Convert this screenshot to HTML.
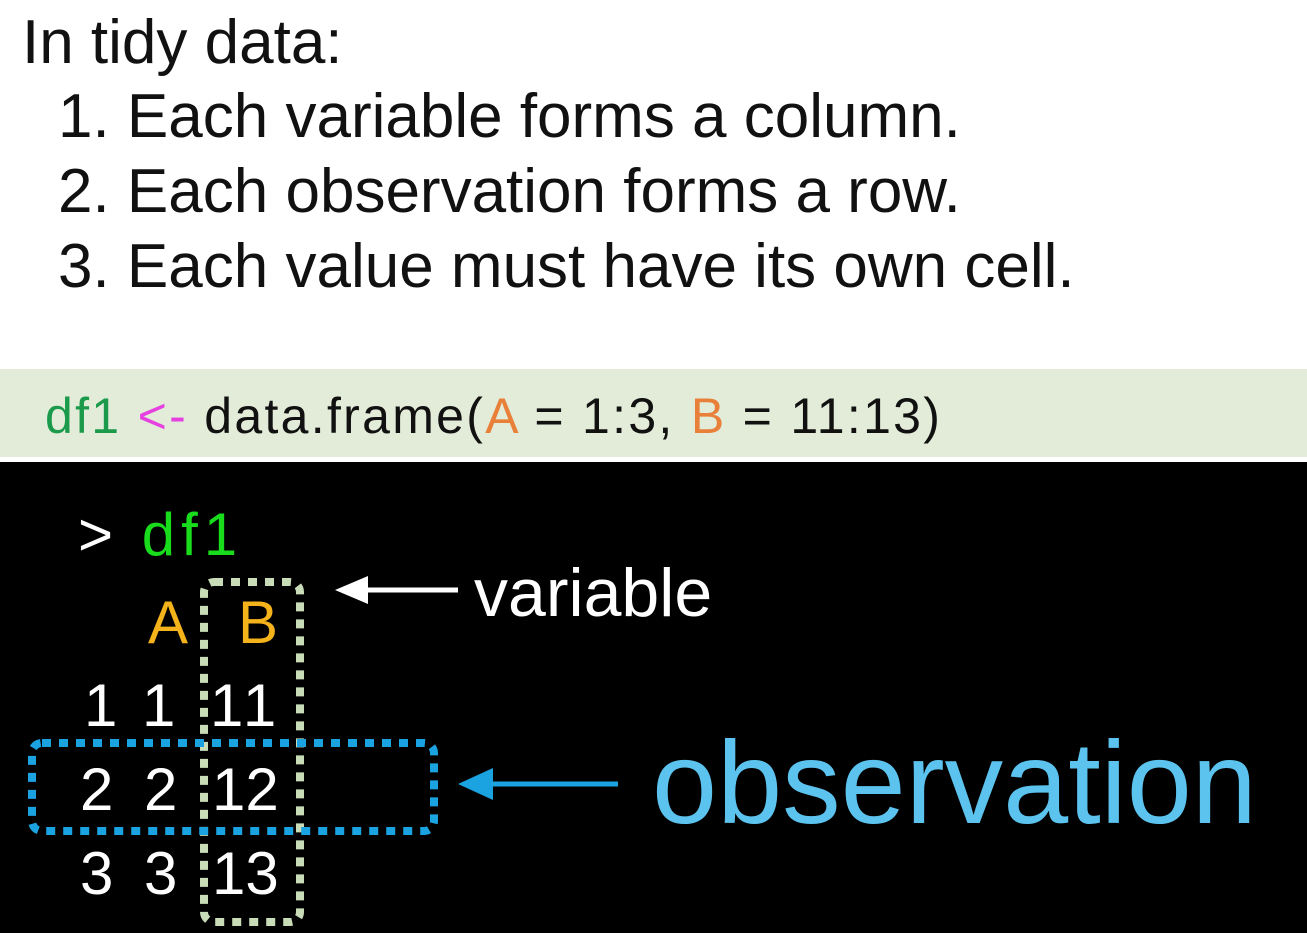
<!DOCTYPE html>
<html><head><meta charset="utf-8"><style>
body{margin:0;width:1307px;height:933px;overflow:hidden;background:#fff;font-family:"Liberation Sans",sans-serif;position:relative}
.t{position:absolute;white-space:nowrap;line-height:1}
.n{position:absolute;white-space:nowrap;line-height:1;font-size:60px;color:#fff}
</style></head><body>
<div class="t" style="left:22px;top:12px;font-size:62px;color:#111">In tidy data:</div>
<div class="t" style="left:58px;top:86px;font-size:62px;color:#111">1. Each variable forms a column.</div>
<div class="t" style="left:58px;top:161px;font-size:62px;color:#111">2. Each observation forms a row.</div>
<div class="t" style="left:58px;top:236px;font-size:62px;color:#111">3. Each value must have its own cell.</div>
<div style="position:absolute;left:0;top:369px;width:1307px;height:88px;background:#e2ecd8"></div>
<div class="t" style="left:45px;top:391px;font-size:50px;color:#111;letter-spacing:2.3px"><span style="color:#1a9a4a">df1</span> <span style="color:#e640e0">&lt;-</span> data.frame(<span style="color:#e8803a">A</span> = 1:3, <span style="color:#e8803a">B</span> = 11:13)</div>
<div style="position:absolute;left:0;top:462px;width:1307px;height:471px;background:#000"></div>
<div class="t" style="left:78px;top:505px;font-size:60px;color:#fff;letter-spacing:6px">&gt; <span style="color:#19dc1c">df1</span></div>
<div class="t" style="left:148px;top:593px;font-size:60px;color:#f4b21b">A</div>
<div class="t" style="left:238px;top:593px;font-size:60px;color:#f4b21b">B</div>
<div class="n" style="left:84px;top:676px">1</div><div class="n" style="left:142px;top:676px">1</div><div class="n" style="left:210px;top:676px;letter-spacing:4px">11</div>
<div class="n" style="left:80px;top:760px">2</div><div class="n" style="left:144px;top:760px">2</div><div class="n" style="left:212px;top:760px">12</div>
<div class="n" style="left:80px;top:844px">3</div><div class="n" style="left:144px;top:844px">3</div><div class="n" style="left:212px;top:844px">13</div>
<svg style="position:absolute;left:0;top:0" width="1307" height="933">
<rect x="204" y="582" width="96" height="340" rx="10" fill="none" stroke="#c8dcb8" stroke-width="8" stroke-dasharray="9 8"/>
<rect x="32" y="743" width="402" height="88" rx="10" fill="none" stroke="#1aa3e0" stroke-width="8" stroke-dasharray="9 8"/>
<line x1="360" y1="590" x2="458" y2="590" stroke="#fff" stroke-width="5"/>
<polygon points="335,590 368,576 368,604" fill="#fff"/>
<line x1="485" y1="784" x2="618" y2="784" stroke="#1aa3e0" stroke-width="5"/>
<polygon points="458,784 493,768 493,800" fill="#1aa3e0"/>
</svg>
<div class="t" style="left:474px;top:559px;font-size:68px;color:#fff">variable</div>
<div class="t" style="left:652px;top:724px;font-size:117px;color:#5cc3ee">observation</div>
</body></html>
